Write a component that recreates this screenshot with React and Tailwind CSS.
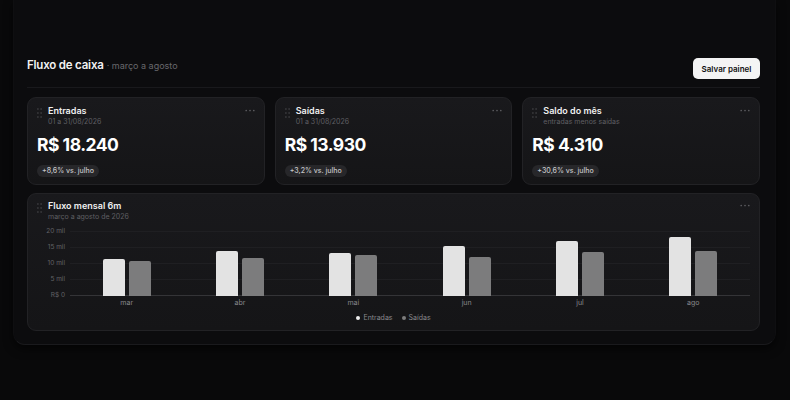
const FONT = { fontFamily: 'Inter, "Noto Sans", sans-serif' }

const CARDS = [
  { title: "Entradas", sub: "01 a 31/08/2026", value: "R$ 18.240", delta: "+8,6% vs. julho" },
  { title: "Saídas", sub: "01 a 31/08/2026", value: "R$ 13.930", delta: "+3,2% vs. julho" },
  { title: "Saldo do mês", sub: "entradas menos saídas", value: "R$ 4.310", delta: "+30,6% vs. julho" },
]

// bar heights in px (scale: 20 mil = 64px)
const MONTHS = [
  { m: "mar", in: 37, out: 35 },
  { m: "abr", in: 45, out: 38 },
  { m: "mai", in: 43, out: 41 },
  { m: "jun", in: 50, out: 39 },
  { m: "jul", in: 55, out: 44 },
  { m: "ago", in: 59, out: 45 },
]

const TICKS = ["20 mil", "15 mil", "10 mil", "5 mil", "R$ 0"]

function DragDots() {
  return (
    <svg width="5" height="10" viewBox="0 0 5 10" className="flex-shrink-0 mt-[3px]">
      {[1, 5, 9].map(y => (
        [0.9, 4.1].map(x => <circle key={`${x}-${y}`} cx={x} cy={y} r="0.8" fill="#4a4a4e" />)
      ))}
    </svg>
  )
}

function MoreDots() {
  return (
    <svg width="10" height="3" viewBox="0 0 10 3">
      <circle cx="1.2" cy="1.5" r="0.85" fill="#5c5c60" />
      <circle cx="5" cy="1.5" r="0.85" fill="#5c5c60" />
      <circle cx="8.8" cy="1.5" r="0.85" fill="#5c5c60" />
    </svg>
  )
}

function CardHead({ title, sub }) {
  return (
    <div className="flex items-start justify-between">
      <div className="flex gap-[6px]">
        <DragDots />
        <div>
          <p className="text-[9px] leading-[12px] font-semibold text-[#efefef]">{title}</p>
          <p className="text-[7px] leading-[10px] text-[#5f5f63]">{sub}</p>
        </div>
      </div>
      <div className="pt-[4px]"><MoreDots /></div>
    </div>
  )
}

function StatCard({ card }) {
  return (
    <div className="flex-1 h-[88px] rounded-[9px] border border-[#222225] bg-gradient-to-b from-[#19191c] to-[#151517] px-[9px] pt-[7px]">
      <CardHead title={card.title} sub={card.sub} />
      <p className="mt-[8px] text-[17.5px] leading-[20px] font-bold text-white tracking-[-0.5px]">{card.value}</p>
      <span className="mt-[7px] inline-flex items-center h-[12px] px-[5px] rounded-full bg-[#27272a] text-[7px] font-medium text-[#c4c4c7]">
        {card.delta}
      </span>
    </div>
  )
}

function Chart() {
  return (
    <div className="h-[138px] rounded-[9px] border border-[#222225] bg-gradient-to-b from-[#19191c] to-[#151517] px-[9px] pt-[6px]">
      <CardHead title="Fluxo mensal 6m" sub="março a agosto de 2026" />
      <div className="flex mt-[1px]">
        <div className="w-[28px] flex flex-col items-end text-[6.5px] leading-[16px] text-[#626266]">
          {TICKS.map(t => <span key={t}>{t}</span>)}
        </div>
        <div className="flex-1 ml-[5px]">
          <div className="relative h-[74px]">
            <div className="absolute inset-x-0 top-[8px] h-[65px] flex flex-col justify-between">
              {TICKS.map((t, i) => (
                <div key={t} className={i === 4 ? "h-px bg-[#343437]" : "h-px bg-[#1f1f22]"} />
              ))}
            </div>
            <div className="absolute inset-x-0 bottom-[1px] flex">
              {MONTHS.map(d => (
                <div key={d.m} className="flex-1 flex justify-center items-end gap-[4px]">
                  <div className="w-[22px] rounded-t-[2px] bg-[#e3e3e3]" style={{ height: d.in }} />
                  <div className="w-[22px] rounded-t-[2px] bg-[#7c7c7d]" style={{ height: d.out }} />
                </div>
              ))}
            </div>
          </div>
          <div className="flex mt-[1px]">
            {MONTHS.map(d => (
              <span key={d.m} className="flex-1 text-center text-[7px] leading-[10px] text-[#88888c]">{d.m}</span>
            ))}
          </div>
        </div>
      </div>
      <div className="flex justify-center gap-[9px] mt-[5px] text-[7px] leading-[10px] text-[#88888c]">
        <span className="flex items-center gap-[3px]"><span className="w-[4px] h-[4px] rounded-full bg-[#eeeeee]" />Entradas</span>
        <span className="flex items-center gap-[3px]"><span className="w-[4px] h-[4px] rounded-full bg-[#7c7c7d]" />Saídas</span>
      </div>
    </div>
  )
}

export default function App() {
  return (
    <div className="w-[790px] h-[400px] bg-[#09090a] pl-[13px] pr-[14px] overflow-hidden" style={FONT}>
      <div className="bg-[#0c0c0e] rounded-b-[12px] border-b border-x border-b-[#1a1a1d] border-x-[#0f0f11] shadow-[0_4px_10px_rgba(0,0,0,0.6)] pl-[13px] pr-[15px] pt-[58px] pb-[13px]">
        <div className="flex items-start justify-between">
          <div className="flex items-baseline gap-[3px]">
            <h1 className="text-[11.5px] leading-[14px] font-semibold text-[#f2f2f2] tracking-[-0.2px]">Fluxo de caixa</h1>
            <span className="text-[9px] text-[#68686c]">· março a agosto</span>
          </div>
          <button className="h-[21px] w-[67px] rounded-[5px] bg-[#f4f4f4] text-[8px] font-semibold text-[#111]">
            Salvar painel
          </button>
        </div>
        <div className="h-px bg-[#19191c] mt-[8px]" />
        <div className="flex gap-[10px] mt-[9px]">
          {CARDS.map(c => <StatCard key={c.title} card={c} />)}
        </div>
        <div className="mt-[8px]">
          <Chart />
        </div>
      </div>
    </div>
  )
}
